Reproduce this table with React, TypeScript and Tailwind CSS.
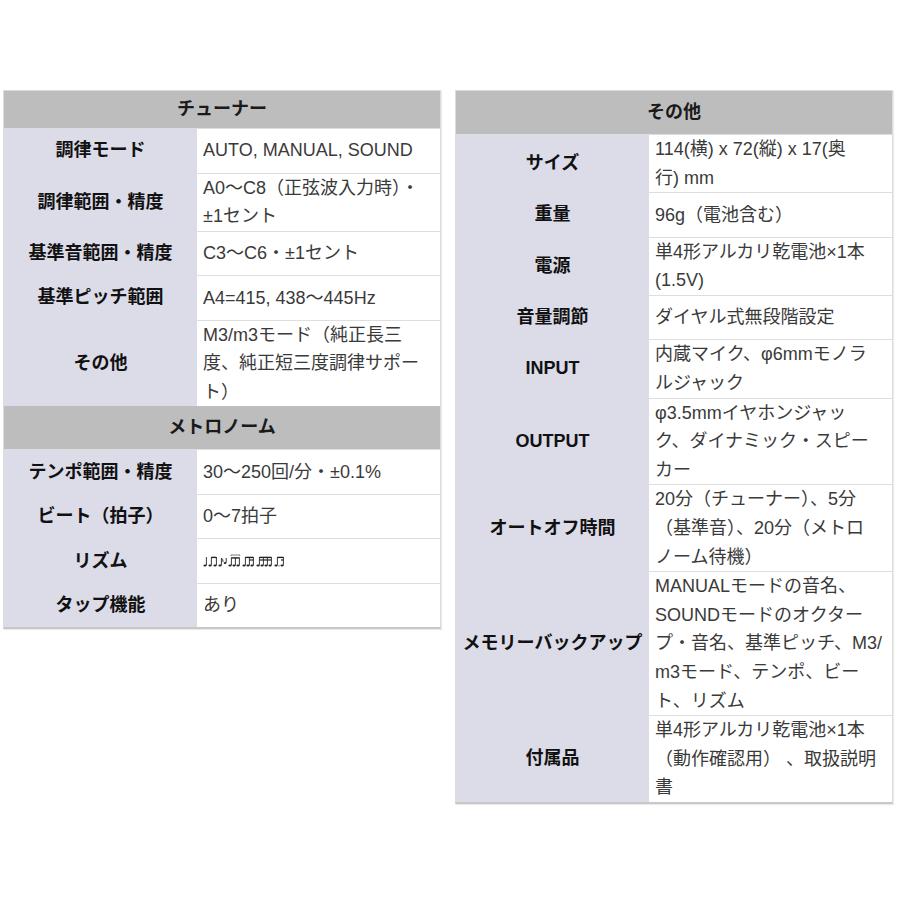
import React from "react";

type Row = { label: string; value: React.ReactNode[] };
type Section = { title: string; rows: Row[] };

const NoteStrip = () => (
  <svg width="84" height="14" viewBox="0 0 84 14" className="block">
    <g fill="#222" stroke="#222" strokeWidth="0.9">
      {/* quarter */}
      <ellipse cx="2" cy="11.5" rx="1.6" ry="1.1" stroke="none" />
      <line x1="3.4" y1="11.3" x2="3.4" y2="3" />
      {/* two eighths */}
      <ellipse cx="7" cy="11.5" rx="1.6" ry="1.1" stroke="none" />
      <ellipse cx="12" cy="11.5" rx="1.6" ry="1.1" stroke="none" />
      <line x1="8.4" y1="11.3" x2="8.4" y2="3" />
      <line x1="13.4" y1="11.3" x2="13.4" y2="3" />
      <line x1="8.4" y1="3.4" x2="13.4" y2="3.4" strokeWidth="1.4" />
      {/* swing */}
      <ellipse cx="17" cy="11.5" rx="1.6" ry="1.1" stroke="none" />
      <line x1="18.4" y1="11.3" x2="18.4" y2="4" />
      <path d="M18.4 4 q2 1.5 1.6 4" fill="none" />
      <ellipse cx="22" cy="9" rx="1.3" ry="0.9" stroke="none" />
      <line x1="23.2" y1="8.8" x2="23.2" y2="4" />
      {/* triplet */}
      <ellipse cx="27" cy="11.5" rx="1.6" ry="1.1" stroke="none" />
      <ellipse cx="31" cy="11.5" rx="1.6" ry="1.1" stroke="none" />
      <ellipse cx="35" cy="11.5" rx="1.6" ry="1.1" stroke="none" />
      <line x1="28.4" y1="11.3" x2="28.4" y2="3.5" />
      <line x1="32.4" y1="11.3" x2="32.4" y2="3.5" />
      <line x1="36.4" y1="11.3" x2="36.4" y2="3.5" />
      <line x1="28.4" y1="3.9" x2="36.4" y2="3.9" strokeWidth="1.4" />
      <path d="M28 2 v-1 h8.8 v1" fill="none" strokeWidth="0.6" />
      {/* eighth + two sixteenths */}
      <ellipse cx="41" cy="11.5" rx="1.6" ry="1.1" stroke="none" />
      <ellipse cx="45" cy="11.5" rx="1.6" ry="1.1" stroke="none" />
      <ellipse cx="49" cy="11.5" rx="1.6" ry="1.1" stroke="none" />
      <line x1="42.4" y1="11.3" x2="42.4" y2="3" />
      <line x1="46.4" y1="11.3" x2="46.4" y2="3" />
      <line x1="50.4" y1="11.3" x2="50.4" y2="3" />
      <line x1="42.4" y1="3.4" x2="50.4" y2="3.4" strokeWidth="1.4" />
      <line x1="46.4" y1="6" x2="50.4" y2="6" strokeWidth="1.2" />
      {/* four sixteenths */}
      <ellipse cx="55" cy="11.5" rx="1.6" ry="1.1" stroke="none" />
      <ellipse cx="59" cy="11.5" rx="1.6" ry="1.1" stroke="none" />
      <ellipse cx="63" cy="11.5" rx="1.6" ry="1.1" stroke="none" />
      <ellipse cx="67" cy="11.5" rx="1.6" ry="1.1" stroke="none" />
      <line x1="56.4" y1="11.3" x2="56.4" y2="3" />
      <line x1="60.4" y1="11.3" x2="60.4" y2="3" />
      <line x1="64.4" y1="11.3" x2="64.4" y2="3" />
      <line x1="68.4" y1="11.3" x2="68.4" y2="3" />
      <line x1="56.4" y1="3.4" x2="68.4" y2="3.4" strokeWidth="1.4" />
      <line x1="56.4" y1="6" x2="68.4" y2="6" strokeWidth="1.2" />
      {/* dotted eighth + sixteenth */}
      <ellipse cx="73" cy="11.5" rx="1.6" ry="1.1" stroke="none" />
      <circle cx="76" cy="11.8" r="0.6" stroke="none" />
      <ellipse cx="79" cy="11.5" rx="1.6" ry="1.1" stroke="none" />
      <line x1="74.4" y1="11.3" x2="74.4" y2="3" />
      <line x1="80.4" y1="11.3" x2="80.4" y2="3" />
      <line x1="74.4" y1="3.4" x2="80.4" y2="3.4" strokeWidth="1.4" />
      <line x1="78" y1="6" x2="80.4" y2="6" strokeWidth="1.2" />
    </g>
  </svg>
);

const leftSections: Section[] = [
  {
    title: "チューナー",
    rows: [
      { label: "調律モード", value: ["AUTO, MANUAL, SOUND"] },
      { label: "調律範囲・精度", value: ["A0〜C8（正弦波入力時）・", "±1セント"] },
      { label: "基準音範囲・精度", value: ["C3〜C6・±1セント"] },
      { label: "基準ピッチ範囲", value: ["A4=415, 438〜445Hz"] },
      { label: "その他", value: ["M3/m3モード（純正長三", "度、純正短三度調律サポー", "ト）"] },
    ],
  },
  {
    title: "メトロノーム",
    rows: [
      { label: "テンポ範囲・精度", value: ["30〜250回/分・±0.1%"] },
      { label: "ビート（拍子）", value: ["0〜7拍子"] },
      { label: "リズム", value: [<NoteStrip key="n" />] },
      { label: "タップ機能", value: ["あり"] },
    ],
  },
];

const rightSections: Section[] = [
  {
    title: "その他",
    rows: [
      { label: "サイズ", value: ["114(横) x 72(縦) x 17(奥", "行) mm"] },
      { label: "重量", value: ["96g（電池含む）"] },
      { label: "電源", value: ["単4形アルカリ乾電池×1本", "(1.5V)"] },
      { label: "音量調節", value: ["ダイヤル式無段階設定"] },
      { label: "INPUT", value: ["内蔵マイク、φ6mmモノラ", "ルジャック"] },
      { label: "OUTPUT", value: ["φ3.5mmイヤホンジャッ", "ク、ダイナミック・スピー", "カー"] },
      { label: "オートオフ時間", value: ["20分（チューナー）、5分", "（基準音）、20分（メトロ", "ノーム待機）"] },
      {
        label: "メモリーバックアップ",
        value: [
          "MANUALモードの音名、",
          "SOUNDモードのオクター",
          "プ・音名、基準ピッチ、M3/",
          "m3モード、テンポ、ビー",
          "ト、リズム",
        ],
      },
      { label: "付属品", value: ["単4形アルカリ乾電池×1本", "（動作確認用） 、取扱説明", "書"] },
    ],
  },
];

const SpecTable = ({ sections, headerH }: { sections: Section[]; headerH: string[] }) => (
  <div className="w-[438px] border border-[#dcdcdc] border-b-2 border-b-[#c8c8c8] shadow-[1px_1px_1px_rgba(0,0,0,0.08)]">
    {sections.map((s, i) => (
      <div key={s.title}>
        <div
          className={`flex items-center justify-center bg-[#bdbdbd] font-bold text-[18px] text-[#1a1a1a] ${headerH[i]}`}
        >
          {s.title}
        </div>
        {s.rows.map((r) => (
          <div key={r.label} className="grid grid-cols-[193px_1fr] border-t border-[#dedede]">
            <div className="flex items-center justify-center bg-[#dcdbe8] font-bold text-[18px] text-[#111] whitespace-nowrap">
              {r.label}
            </div>
            <div className="flex min-h-[43.5px] flex-col justify-center bg-white pl-[6px] text-[18px] leading-[28.6px] text-[#3a3a3a]">
              {r.value.map((v, k) => (
                <div key={k} className="whitespace-pre">
                  {v}
                </div>
              ))}
            </div>
          </div>
        ))}
      </div>
    ))}
  </div>
);

export default function App() {
  return (
    <div
      className="flex h-[900px] w-[900px] items-start gap-[14px] bg-white pl-[3px] pt-[90px]"
      style={{ fontFamily: '"Liberation Sans", "Noto Sans CJK JP", sans-serif' }}
    >
      <SpecTable sections={leftSections} headerH={["h-[37px]", "h-[43px]"]} />
      <SpecTable sections={rightSections} headerH={["h-[43px]"]} />
    </div>
  );
}
